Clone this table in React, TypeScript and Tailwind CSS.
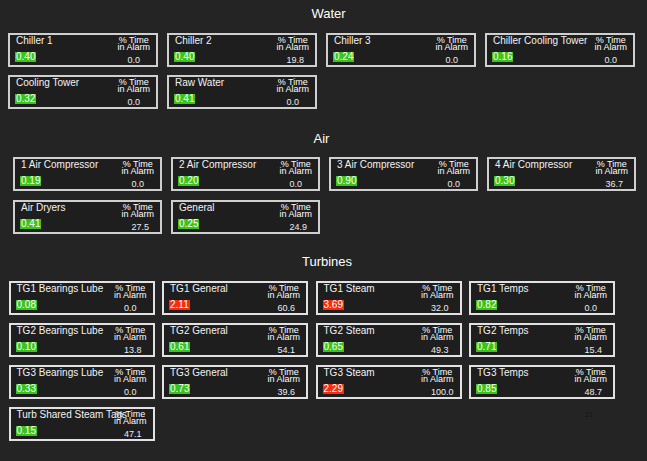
import React from "react";

type Item = { name: string; val: string; pct: string; red?: boolean };

const water: Item[] = [
  { name: "Chiller 1", val: "0.40", pct: "0.0" },
  { name: "Chiller 2", val: "0.40", pct: "19.8" },
  { name: "Chiller 3", val: "0.24", pct: "0.0" },
  { name: "Chiller Cooling Tower", val: "0.16", pct: "0.0" },
  { name: "Cooling Tower", val: "0.32", pct: "0.0" },
  { name: "Raw Water", val: "0.41", pct: "0.0" },
];

const air: Item[] = [
  { name: "1 Air Compressor", val: "0.19", pct: "0.0" },
  { name: "2 Air Compressor", val: "0.20", pct: "0.0" },
  { name: "3 Air Compressor", val: "0.90", pct: "0.0" },
  { name: "4 Air Compressor", val: "0.30", pct: "36.7" },
  { name: "Air Dryers", val: "0.41", pct: "27.5" },
  { name: "General", val: "0.25", pct: "24.9" },
];

const turbines: Item[] = [
  { name: "TG1 Bearings Lube", val: "0.08", pct: "0.0" },
  { name: "TG1 General", val: "2.11", pct: "60.6", red: true },
  { name: "TG1 Steam", val: "3.69", pct: "32.0", red: true },
  { name: "TG1 Temps", val: "0.82", pct: "0.0" },
  { name: "TG2 Bearings Lube", val: "0.10", pct: "13.8" },
  { name: "TG2 General", val: "0.61", pct: "54.1" },
  { name: "TG2 Steam", val: "0.65", pct: "49.3" },
  { name: "TG2 Temps", val: "0.71", pct: "15.4" },
  { name: "TG3 Bearings Lube", val: "0.33", pct: "0.0" },
  { name: "TG3 General", val: "0.73", pct: "39.6" },
  { name: "TG3 Steam", val: "2.29", pct: "100.0", red: true },
  { name: "TG3 Temps", val: "0.85", pct: "48.7" },
  { name: "Turb Shared Steam Tags", val: "0.15", pct: "47.1" },
];

function Card({ item, width, border }: { item: Item; width: string; border: string }) {
  return (
    <div className={`${width} ${border} h-[34px] border-2 bg-[#1e1e1e] flex`}>
      <div className="flex-1 min-w-0 flex flex-col">
        <div className="pl-[6px] text-[10px] leading-[11px] text-[#f2f2f2] whitespace-nowrap">{item.name}</div>
        <div className="pl-[5px] mt-[6px] flex">
          <span
            className={`${item.red ? "bg-[#f42d0c]" : "bg-[#3cc21c]"} h-[10px] px-[1px] text-[10px] leading-[10px] text-white`}
          >
            {item.val}
          </span>
        </div>
      </div>
      <div className="relative pr-[6px] pt-[2px] flex flex-col">
        <div className="text-center text-[9px] leading-[7px] text-white">% Time</div>
        <div className="text-center text-[9px] leading-[7px] text-white">in Alarm</div>
        <div className="pl-[10px] mt-[4px] text-[9px] leading-[10px] text-[#ececec]">{item.pct}</div>
      </div>
    </div>
  );
}

export default function App() {
  return (
    <div
      className="relative w-full h-[461px] bg-[#242424] pt-[6px] overflow-hidden"
      style={{ fontFamily: '"Liberation Sans", Arial, sans-serif' }}
    >
      <div className="h-[16px] leading-[16px] text-[13px] text-white text-center pl-[10px]">Water</div>
      <div className="mt-[11px] ml-[8px] flex flex-wrap gap-x-[9px] gap-y-[8px]">
        {water.map((it) => (
          <Card key={it.name} item={it} width="w-[150px]" border="border-[#cfcfcf]" />
        ))}
      </div>

      <div className="mt-[22px] h-[16px] leading-[16px] text-[13px] text-white text-center pr-[4px]">Air</div>
      <div className="mt-[10px] ml-[13px] flex flex-wrap gap-x-[9px] gap-y-[9px]">
        {air.map((it) => (
          <Card key={it.name} item={it} width="w-[149px]" border="border-[#cfcfcf]" />
        ))}
      </div>

      <div className="mt-[20px] h-[16px] leading-[16px] text-[13px] text-white text-center pl-[7px]">Turbines</div>
      <div className="mt-[11px] ml-[8.5px] w-[620px] flex flex-wrap gap-x-[7.5px] gap-y-[8px]">
        {turbines.map((it) => (
          <Card key={it.name} item={it} width="w-[146px]" border="border-[#e2e2e2]" />
        ))}
      </div>

      <div className="absolute left-[585px] top-[411px] text-[7px] leading-[8px] text-[#141414]">21</div>
    </div>
  );
}
